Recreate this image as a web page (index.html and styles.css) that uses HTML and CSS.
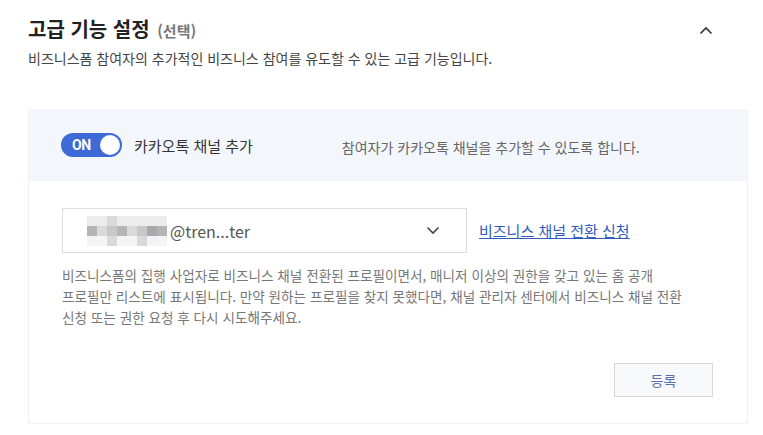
FILE: index.html
```html
<!DOCTYPE html>
<html lang="ko">
<head>
<meta charset="utf-8">
<link rel="stylesheet" href="styles.css">
</head>
<body>
<div class="page">
  <div class="head">
    <div class="head-text">
      <h2 class="title">고급 기능 설정 <span class="opt">(선택)</span></h2>
      <p class="sub">비즈니스폼 참여자의 추가적인 비즈니스 참여를 유도할 수 있는 고급 기능입니다.</p>
    </div>
    <svg class="caret" width="14" height="9" viewBox="0 0 14 9"><path d="M1.5 7.5 L7 2 L12.5 7.5" fill="none" stroke="#333" stroke-width="1.6"/></svg>
  </div>
  <div class="card">
    <div class="card-head">
      <div class="toggle"><span class="on">ON</span><span class="knob"></span></div>
      <span class="label">카카오톡 채널 추가</span>
      <span class="desc">참여자가 카카오톡 채널을 추가할 수 있도록 합니다.</span>
    </div>
    <div class="card-body">
      <div class="row">
        <div class="select">
          <div class="mosaic">
            <i class="c1"></i><i class="c1"></i><i class="c2"></i><i class="c1"></i><i class="c1"></i><i class="c1"></i><i class="c1"></i><i class="c1"></i>
            <i class="c3"></i><i class="c2"></i><i class="c4"></i><i class="c3"></i><i class="c2"></i><i class="c4"></i><i class="c5"></i><i class="c3"></i>
            <i class="c0"></i><i class="c0"></i><i class="c2"></i><i class="c0"></i><i class="c0"></i><i class="c2"></i><i class="c0"></i><i class="c0"></i>
          </div>
          <span class="handle">@tren...ter</span>
          <svg class="chev" width="14" height="9" viewBox="0 0 14 9"><path d="M1.5 1.5 L7 7 L12.5 1.5" fill="none" stroke="#444" stroke-width="1.6"/></svg>
        </div>
        <a class="link" href="#">비즈니스 채널 전환 신청</a>
      </div>
      <p class="help">비즈니스폼의 집행 사업자로 비즈니스 채널 전환된 프로필이면서, 매니저 이상의 권한을 갖고 있는 홈 공개<br>프로필만 리스트에 표시됩니다. 만약 원하는 프로필을 찾지 못했다면, 채널 관리자 센터에서 비즈니스 채널 전환<br>신청 또는 권한 요청 후 다시 시도해주세요.</p>
      <div class="actions"><button class="btn">등록</button></div>
    </div>
  </div>
</div>
</body>
</html>
```

FILE: styles.css
```css
* { box-sizing: border-box; }
html, body { margin: 0; padding: 0; background: #fff; }
body { font-family: "Noto Sans CJK KR", "Noto Sans", sans-serif; color: #333; }
.page { padding: 15px 15px 0 28px; width: 763px; }
.head { display: flex; justify-content: space-between; align-items: flex-start; padding-right: 35px; }
.title { margin: 0; font-size: 20px; font-weight: 700; color: #222; line-height: 28px; }
.opt { font-size: 15px; color: #777; font-weight: 700; margin-left: 2px; }
.sub { margin: 3px 0 0; font-size: 14px; color: #444; line-height: 20px; }
.caret { margin-top: 11px; }
.card { margin-top: 41px; width: 720px; border: 1px solid #f0f2f5; border-top: none; }
.card-head { background: #f3f7fb; height: 72px; display: flex; align-items: center; padding-left: 32px; }
.toggle { width: 61px; height: 24px; border-radius: 12px; background: #3d6ad6; display: flex; align-items: center; justify-content: space-between; padding: 0 2px 0 11px; }
.on { color: #fff; font-family: "Roboto", sans-serif; font-weight: 700; font-size: 14px; letter-spacing: -0.5px; }
.knob { width: 20px; height: 20px; border-radius: 50%; background: #fff; }
.label { margin-left: 12px; font-size: 15px; color: #333; }
.desc { margin-left: 89px; font-size: 14px; color: #666; margin-top: 4px; }
.card-body { padding: 27px 33px 26px 33px; }
.row { display: flex; align-items: center; }
.select { width: 405px; height: 45px; border: 1px solid #dcdcdc; display: flex; align-items: center; padding-left: 24px; padding-right: 26px; }
.mosaic { display: grid; grid-template-columns: repeat(8, 10px); grid-template-rows: repeat(3, 10px); }
.mosaic i { display: block; }
.c0 { background: #f4f4f4; }
.c1 { background: #ececec; }
.c2 { background: #d9d9d9; }
.c3 { background: #b5b5b5; }
.c4 { background: #c8c8c8; }
.c5 { background: #a9a9ae; }
.handle { margin-left: 3px; font-size: 16px; color: #555; }
.chev { margin-left: auto; }
.link { margin-left: 12px; font-size: 15px; color: #2f5bbf; text-decoration: underline; }
.help { margin: 12px 0 0; font-size: 13.6px; line-height: 21px; color: #777; }
.actions { display: flex; justify-content: flex-end; margin-top: 35px; padding-right: 1px; }
.btn { width: 99px; height: 34px; background: #f7f9fc; border: 1px solid #d6d6d6; font-family: inherit; font-size: 14px; color: #5b6fa8; padding: 0; }
```
